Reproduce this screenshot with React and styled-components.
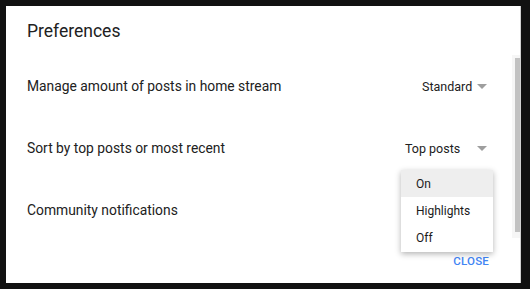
import React from "react";
import styled, { createGlobalStyle } from "styled-components";

const GlobalStyle = createGlobalStyle`
    html, body {
        margin: 0;
        background-color: #111111;
        font-family: Roboto, "Liberation Sans", Arial, sans-serif;
    }
`

const settings = [
    { label: "Manage amount of posts in home stream", value: "Standard", width: 47 },
    { label: "Sort by top posts or most recent", value: "Top posts", width: 64 },
    { label: "Community notifications", value: "On", width: 64, open: true },
]

const menuItems = ["On", "Highlights", "Off"]

function App() {
    return (
        <>
            <GlobalStyle />
            <Page>
                <Dialog>
                    <Header>Preferences</Header>
                    <Body>
                        <List>
                            {settings.map((item) => (
                                <Row key={item.label}>
                                    <Label>{item.label}</Label>
                                    {/* open select is covered by its menu */}
                                    <Select $open={item.open}>
                                        <Value $width={item.width}>{item.value}</Value>
                                        <Arrow />
                                    </Select>
                                </Row>
                            ))}
                        </List>
                        <ScrollTrack>
                            <ScrollThumb />
                        </ScrollTrack>
                    </Body>
                    <Footer>
                        <CloseButton>Close</CloseButton>
                    </Footer>
                    <Menu>
                        {menuItems.map((name, index) => (
                            <MenuItem key={name} $active={index === 0}>{name}</MenuItem>
                        ))}
                    </Menu>
                </Dialog>
            </Page>
        </>
    )
}
export default App

const Page = styled.div`
    padding: 6px 0 0 6px;
`

const Dialog = styled.div`
    position: relative;
    width: 515px;
    height: 277px;
    background-color: #ffffff;
    display: flex;
    flex-direction: column;
    box-sizing: border-box;
    border-right: 1px solid #d0d0d0;
`

const Header = styled.div`
    height: 49px;
    flex-shrink: 0;
    display: flex;
    align-items: center;
    padding-left: 21px;
    font-size: 17.5px;
    color: #212121;
`

const Body = styled.div`
    height: 183px;
    flex-shrink: 0;
    display: flex;
`

const List = styled.div`
    flex: 1;
    overflow: hidden;
`

const ScrollTrack = styled.div`
    width: 8px;
    box-sizing: border-box;
    padding: 3px 0 6px 3px;
    background-color: #f6f6f6;
    display: flex;
`

const ScrollThumb = styled.div`
    flex: 1;
    background-color: #c2c2c2;
`

const Row = styled.div`
    height: 62px;
    display: flex;
    align-items: center;
    justify-content: space-between;
    padding: 0 25px 0 21px;
`

const Label = styled.span`
    font-size: 13.85px;
    color: #212121;
`

const Select = styled.div`
    display: flex;
    align-items: center;
    gap: 8px;
    visibility: ${(props) => (props.$open ? "hidden" : "visible")};
`

const Value = styled.span`
    width: ${(props) => props.$width}px;
    font-size: 12.5px;
    color: #212121;
    white-space: nowrap;
`

const Arrow = styled.span`
    width: 0;
    height: 0;
    border-left: 5px solid transparent;
    border-right: 5px solid transparent;
    border-top: 5px solid #9e9e9e;
    margin-top: 1px;
`

const Footer = styled.div`
    flex: 1;
    display: flex;
    align-items: center;
    justify-content: flex-end;
    padding-right: 23px;
`

const CloseButton = styled.button`
    border: none;
    background: none;
    padding: 6px 8px;
    font-family: inherit;
    font-size: 11.5px;
    font-weight: 500;
    letter-spacing: 0.2px;
    text-transform: uppercase;
    color: #4285f4;
`

const Menu = styled.ul`
    position: absolute;
    left: 395px;
    top: 164px;
    width: 92px;
    margin: 0;
    padding: 0 0 1px 0;
    list-style: none;
    background-color: #ffffff;
    box-shadow: 0 2px 6px rgba(0, 0, 0, 0.3);
`

const MenuItem = styled.li`
    height: 27px;
    display: flex;
    align-items: center;
    padding-left: 15px;
    font-size: 12px;
    color: #1a1a1a;
    background-color: ${(props) => (props.$active ? "#eeeeee" : "#ffffff")};
`
